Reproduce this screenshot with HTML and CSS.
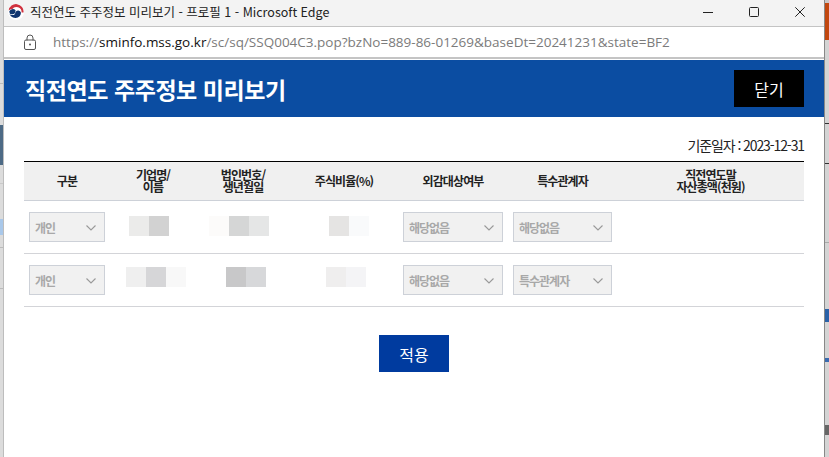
FILE: index.html
```html
<!DOCTYPE html>
<html lang="ko">
<head>
<meta charset="utf-8">
<title>직전연도 주주정보 미리보기</title>
<link rel="stylesheet" href="styles.css">
</head>
<body>
<div class="desk-left"></div>
<main class="window">
  <div class="titlebar">
    <svg class="logo" width="16" height="16" viewBox="0 0 16 16">
      <circle cx="8" cy="8" r="8" fill="#fff"/>
      <path d="M.6 6.6A7.5 7.5 0 0 1 15.5 8.6L13.6 8.4A5.2 5.2 0 0 0 4.2 5.2 5 5 0 0 0 .6 6.6Z" fill="#d0323f"/>
      <path d="M1 7.6A3.2 3.2 0 0 0 7.4 8.2 3 3 0 0 1 13 8.8 5.7 5.7 0 0 1 7.6 14 6.4 6.4 0 0 1 1 7.6Z" fill="#10346f"/>
      <path d="M1.2 7.4A4 4 0 0 1 7.6 6.2 3.3 3.3 0 0 0 7.4 8.2 3.2 3.2 0 0 1 1.2 7.4Z" fill="#12386f"/>
    </svg>
    <span class="title-text">직전연도 주주정보 미리보기 - 프로필 1 - Microsoft Edge</span>
    <div class="win-controls">
      <svg width="10" height="10" viewBox="0 0 10 10"><path d="M0 5.5H10" stroke="#222" fill="none"/></svg>
      <svg width="10" height="10" viewBox="0 0 10 10"><rect x=".5" y=".5" width="9" height="9" rx="1" stroke="#222" fill="none"/></svg>
      <svg width="10" height="10" viewBox="0 0 10 10"><path d="M.3 .3L9.7 9.7M9.7 .3L.3 9.7" stroke="#222" fill="none"/></svg>
    </div>
  </div>
  <div class="addressbar">
    <svg class="lock" width="12" height="16" viewBox="0 0 12 16"><path d="M3 6.5V4a3 3 0 0 1 6 0v2.5" fill="none" stroke="#555"/><rect x=".5" y="6" width="11" height="9.5" rx="1.5" fill="none" stroke="#555"/><circle cx="6" cy="10.5" r="1" fill="#555"/></svg>
    <span class="url">https://<b>sminfo.mss.go.kr</b>/sc/sq/SSQ004C3.pop?bzNo=889-86-01269&amp;baseDt=20241231&amp;state=BF2</span>
  </div>
  <header class="page-head">
    <h1>직전연도 주주정보 미리보기</h1>
    <button class="close-btn" type="button">닫기</button>
  </header>
  <section class="content">
    <p class="base-date">기준일자 : 2023-12-31</p>
    <table class="grid">
      <colgroup>
        <col class="c1"><col class="c2"><col class="c3"><col class="c4"><col class="c5"><col class="c6"><col>
      </colgroup>
      <thead>
        <tr>
          <th>구분</th><th>기업명/<br>이름</th><th>법인번호/<br>생년월일</th><th>주식비율(%)</th><th>외감대상여부</th><th>특수관계자</th><th>직전연도말<br>자산총액(천원)</th>
        </tr>
      </thead>
      <tbody>
        <tr>
          <td><div class="sel sel-1">개인<svg width="10" height="6" viewBox="0 0 10 6"><path d="M.5 .5L5 5L9.5 .5" fill="none" stroke="#999" stroke-width="1.1"/></svg></div></td>
          <td><div class="blur r1 o14"><i class="p-eb"></i><i class="p-d2"></i></div></td>
          <td><div class="blur r1 o8"><i class="p-fc"></i><i class="p-d5"></i><i class="p-e5"></i></div></td>
          <td><div class="blur r1 o34"><i class="p-e4"></i><i class="p-f9"></i></div></td>
          <td><div class="sel sel-2">해당없음<svg width="10" height="6" viewBox="0 0 10 6"><path d="M.5 .5L5 5L9.5 .5" fill="none" stroke="#999" stroke-width="1.1"/></svg></div></td>
          <td><div class="sel sel-3">해당없음<svg width="10" height="6" viewBox="0 0 10 6"><path d="M.5 .5L5 5L9.5 .5" fill="none" stroke="#999" stroke-width="1.1"/></svg></div></td>
          <td></td>
        </tr>
        <tr>
          <td><div class="sel sel-1">개인<svg width="10" height="6" viewBox="0 0 10 6"><path d="M.5 .5L5 5L9.5 .5" fill="none" stroke="#999" stroke-width="1.1"/></svg></div></td>
          <td><div class="blur r2 o11"><i class="p-ef"></i><i class="p-d6"></i><i class="p-f8"></i></div></td>
          <td><div class="blur r2 o25"><i class="p-c8"></i><i class="p-d7"></i></div></td>
          <td><div class="blur r2 o31"><i class="p-ee"></i><i class="p-f4"></i></div></td>
          <td><div class="sel sel-2">해당없음<svg width="10" height="6" viewBox="0 0 10 6"><path d="M.5 .5L5 5L9.5 .5" fill="none" stroke="#999" stroke-width="1.1"/></svg></div></td>
          <td><div class="sel sel-3">특수관계자<svg width="10" height="6" viewBox="0 0 10 6"><path d="M.5 .5L5 5L9.5 .5" fill="none" stroke="#999" stroke-width="1.1"/></svg></div></td>
          <td></td>
        </tr>
      </tbody>
    </table>
    <div class="actions"><button class="apply-btn" type="button">적용</button></div>
  </section>
</main>
<div class="desk-right"></div>
</body>
</html>
```
FILE: styles.css
```css
* { box-sizing: border-box; }
html, body { height: 100%; }
body {
  margin: 0;
  display: flex;
  overflow: hidden;
  background: #d8d8d8;
  font-family: "Noto Sans CJK KR", "Noto Sans", sans-serif;
}
.desk-left {
  width: 4px;
  flex: none;
  border-right: 1px solid #bdbdbd;
  background: linear-gradient(#dcdcdc 0 83px, #bbb 83px 84px, #dcdcdc 84px 125px, #4d6a85 125px 165px, #dcdcdc 165px 183px, #c9c9c9 183px 184px, #dcdcdc 184px 219px, #a9c8ea 219px 235px, #dcdcdc 235px 247px, #bbb 247px 248px, #dcdcdc 248px 288px, #bbb 288px 289px, #dcdcdc 289px);
}
.desk-right {
  width: 5px;
  flex: none;
  background: linear-gradient(#c8c8c8 0 3px, #c2470f 3px 40px, #d4d4d4 40px 123px, #333 123px 124px, #d4d4d4 124px 163px, #333 163px 164px, #d4d4d4 164px 242px, #aaa 242px 243px, #d4d4d4 243px 309px, #2a62a8 309px 322px, #d4d4d4 322px 358px, #3a6bb0 358px 362px, #d4d4d4 362px 425px, #666 425px 435px, #d4d4d4 435px);
  border-left: 1px solid #888;
}
.window {
  flex: 1;
  min-width: 0;
  display: flex;
  flex-direction: column;
  background: #fff;
}
.titlebar {
  height: 27px;
  flex: none;
  display: flex;
  align-items: center;
  padding: 0 0 3px 4px;
  background: #f3f3f3;
  border-bottom: 1px solid #c4c4c4;
}
.logo { flex: none; margin-right: 6px; }
.title-text { font-size: 12.5px; color: #222; white-space: nowrap; }
.win-controls {
  margin-left: auto;
  display: flex;
  gap: 36px;
  padding-right: 19px;
}
.addressbar {
  height: 32px;
  flex: none;
  display: flex;
  align-items: center;
  margin-bottom: 1px;
  padding-left: 20px;
  background: #fff;
  border-bottom: 2px solid #c4c4c4;
}
.lock { flex: none; margin-right: 17px; }
.url { font-family: "Open Sans", sans-serif; font-size: 13.5px; color: #7b7b7b; white-space: nowrap; }
.url b { font-weight: 400; color: #111; }
.page-head {
  height: 57px;
  flex: none;
  padding: 10px 20px 0 21px;
  display: flex;
  justify-content: space-between;
  align-items: flex-start;
  background: #0b4da2;
}
.page-head h1 {
  margin: 0;
  line-height: 38px;
  font-size: 23px;
  font-weight: 700;
  letter-spacing: -.43px;
  color: #fff;
}
.close-btn, .apply-btn {
  width: 70px;
  height: 37px;
  border: 0;
  padding: 0;
  font-family: inherit;
  font-size: 16px;
  color: #fff;
}
.close-btn { background: #000; }
.apply-btn { background: #003b9f; }
.content { padding: 0 20px; }
.base-date {
  margin: 0;
  padding-top: 19px;
  height: 44px;
  line-height: 18px;
  text-align: right;
  font-size: 14px;
  letter-spacing: -1.1px;
  color: #222;
}
.grid {
  width: 780px;
  table-layout: fixed;
  border-collapse: collapse;
  border-top: 1px solid #000;
}
.c1, .c2 { width: 86px; }
.c3 { width: 94px; }
.c4 { width: 108px; }
.c5 { width: 110px; }
.c6 { width: 109px; }
.grid th {
  height: 39px;
  padding: 0;
  background: #f0f0f0;
  border-bottom: 1px solid #cdd1d8;
  font-size: 12px;
  line-height: 12px;
  font-weight: 700;
  letter-spacing: -.9px;
  color: #222;
}
.grid td {
  height: 53px;
  padding: 0 5px;
  border-bottom: 1px solid #d3d4d8;
}
.sel {
  height: 30px;
  display: flex;
  align-items: center;
  justify-content: space-between;
  padding: 0 8px 0 5px;
  background: #f1f1f1;
  border: 1px solid #cdd1d8;
  font-size: 12px;
  font-weight: 700;
  letter-spacing: -1px;
  color: #a8a8a8;
}
.sel svg { flex: none; margin-top: 2px; }
.sel-1 { width: 76px; }
.sel-2 { width: 100px; }
.sel-3 { width: 99px; }
.blur { display: flex; }
.blur i { width: 20px; height: 20px; }
.r1 { margin-bottom: 2px; }
.r2 { margin-bottom: 6px; }
.o8 { padding-left: 8px; }
.o11 { padding-left: 11px; }
.o14 { padding-left: 14px; }
.o25 { padding-left: 25px; }
.o31 { padding-left: 31px; }
.o34 { padding-left: 34px; }
.p-eb { background: #ebebea; }
.p-d2 { background: #d2d2d2; }
.p-fc { background: #fcfbfa; }
.p-d5 { background: #d5d6d6; }
.p-e5 { background: #e5e6e6; }
.p-e4 { background: #e5e4e3; }
.p-f9 { background: #f9fafb; }
.p-ef { background: #efefef; }
.p-d6 { background: #d6d6d8; }
.p-f8 { background: #f8f8f8; }
.p-c8 { background: #c8c8c9; }
.p-d7 { background: #d7d8da; }
.p-ee { background: #efeeee; }
.p-f4 { background: #f4f4f6; }
.actions { display: flex; justify-content: center; padding-top: 28px; }
```
